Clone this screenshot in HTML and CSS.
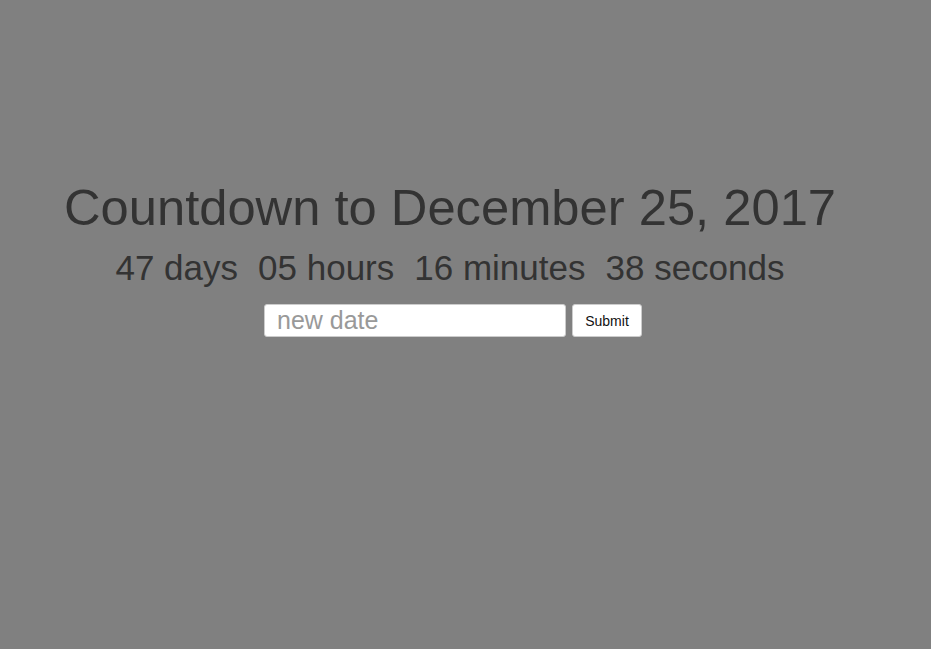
FILE: index.html
```html
<!DOCTYPE html>
<html>
<head>
<meta charset="utf-8">
<link rel="stylesheet" href="styles.css">
</head>
<body>
<div class="wrap">
  <h1 class="title">Countdown to December 25, 2017</h1>
  <div class="timer"><span>47 days</span><span>05 hours</span><span>16 minutes</span><span>38 seconds</span></div>
  <form class="form">
    <input class="date-input" type="text" placeholder="new date">
    <button class="submit" type="button">Submit</button>
  </form>
</div>
</body>
</html>
```
FILE: styles.css
```css
html, body {
  margin: 0;
  padding: 0;
  background: #808080;
  height: 100%;
}
body {
  font-family: "Liberation Sans", Arial, sans-serif;
  color: #333333;
}
.wrap {
  width: 900px;
  padding-top: 178px;
  display: flex;
  flex-direction: column;
  align-items: center;
}
.title {
  margin: 0;
  font-size: 50.7px;
  font-weight: normal;
  line-height: 60px;
}
.timer {
  display: flex;
  gap: 20px;
  font-size: 35px;
  line-height: 40px;
  margin-top: 10px;
}
.form {
  margin: 16px 0 0 6px;
  display: flex;
  gap: 6px;
}
.date-input {
  width: 302px;
  height: 33px;
  box-sizing: border-box;
  border: 1px solid #cccccc;
  border-radius: 3px;
  background: #fff;
  font-family: "Liberation Sans", Arial, sans-serif;
  font-size: 25px;
  padding: 0 12px;
  color: #333;
}
.date-input::placeholder {
  color: #999999;
}
.submit {
  height: 33px;
  width: 70px;
  box-sizing: border-box;
  border: 1px solid #cccccc;
  border-radius: 3px;
  background: #fff;
  font-family: "Liberation Sans", Arial, sans-serif;
  font-size: 14px;
  color: #111;
  padding: 0;
}
```
